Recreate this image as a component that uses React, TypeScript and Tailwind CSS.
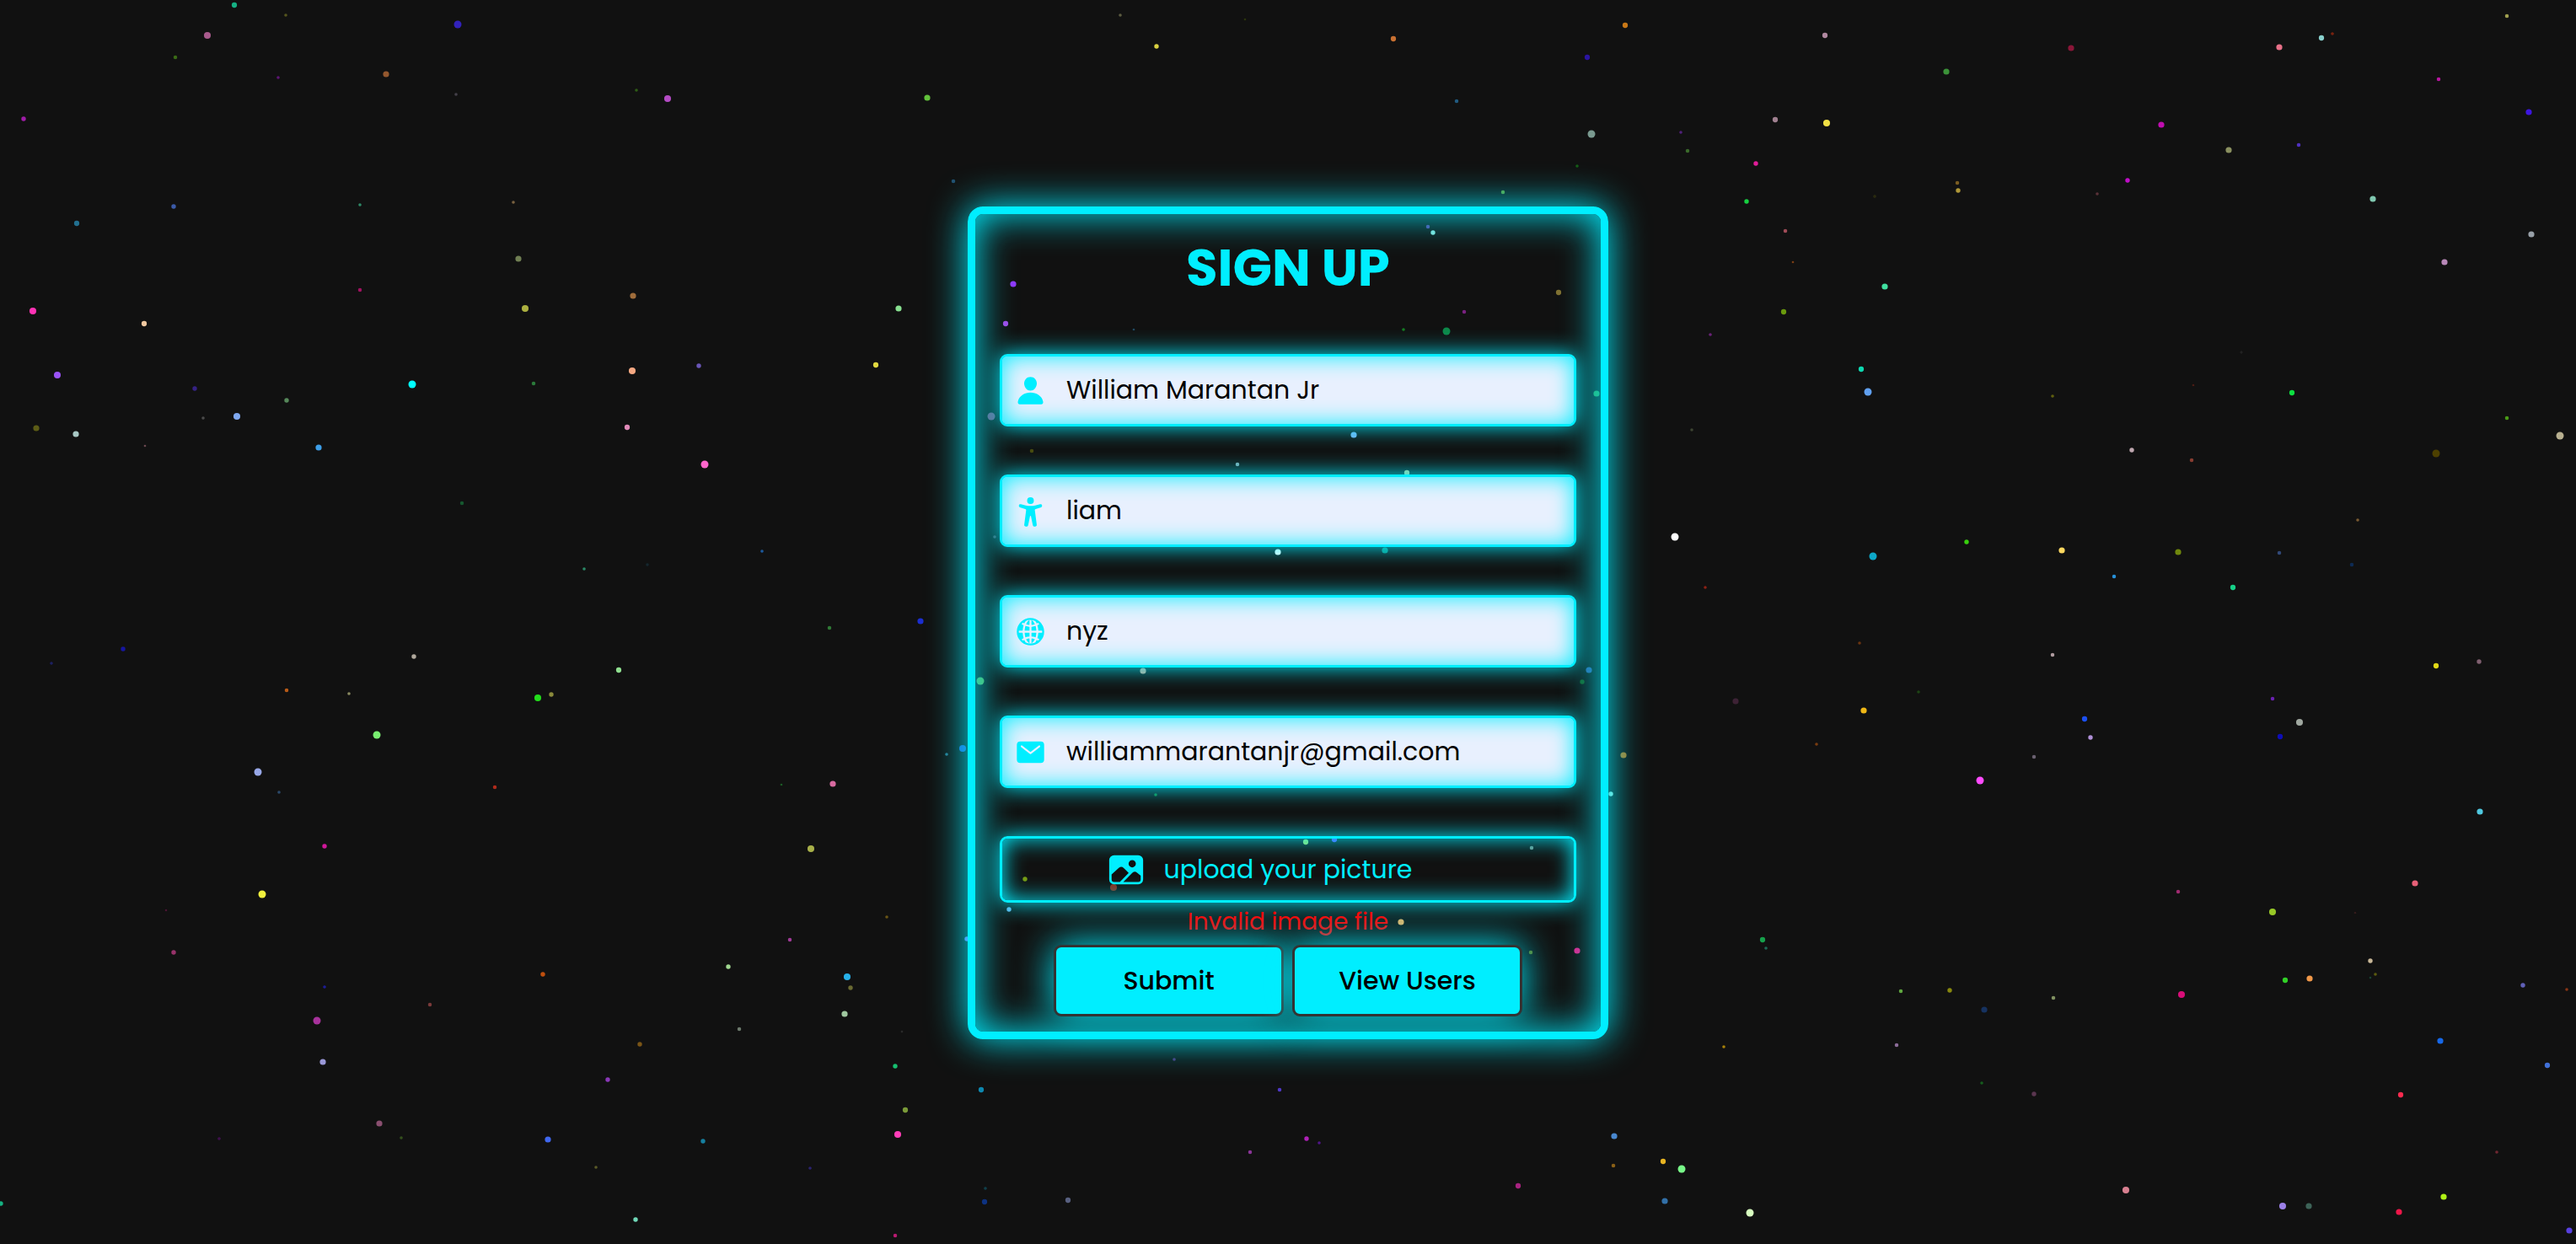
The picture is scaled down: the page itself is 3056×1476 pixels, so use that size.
import React from "react";
import { IoGlobe, IoImage, IoMail, IoPerson } from "react-icons/io5";

type Star = [x: number, y: number, r: number, color: string];

const stars: Star[] = [
  [278, 6, 3.5, "#12b083"], [339, 18, 2, "#55551a"], [543, 29, 5, "#3322bb"], [246, 42, 4.5, "#a85a8c"],
  [208, 68, 2.5, "#3a6a15"], [330, 92, 2, "#5c1673"], [458, 88, 4, "#94592f"], [541, 112, 2, "#44404a"],
  [755, 107, 2, "#2f5c15"], [792, 117, 4.5, "#b44cc4"], [1100, 116, 4, "#62c23a"], [28, 141, 3, "#a01ca8"],
  [206, 245, 3, "#3a5aa8"], [427, 243, 2, "#2d8a68"], [609, 240, 2, "#7a6240"], [91, 265, 3.5, "#226f90"],
  [615, 307, 4, "#6f7f52"], [623, 366, 4.5, "#acb03f"], [427, 344, 2.5, "#a01260"], [751, 351, 4, "#a06d3a"],
  [39, 369, 4.5, "#ff33b5"], [171, 384, 3.5, "#f0c8a0"], [1066, 366, 4, "#88e090"], [68, 445, 4.5, "#9a52f5"],
  [231, 461, 3, "#352285"], [340, 475, 3, "#56885a"], [489, 456, 5, "#00ffff"], [633, 455, 2.5, "#2c7a3a"],
  [750, 440, 4.5, "#f5a882"], [829, 434, 3, "#6a56b8"], [1039, 433, 3.5, "#e0d840"], [281, 494, 4.5, "#7fa8f0"],
  [241, 496, 2, "#4c4c4c"], [43, 508, 4, "#5c5c14"], [90, 515, 4, "#a8c8c4"], [172, 529, 1.5, "#6a4a50"],
  [378, 531, 4, "#3c9ee8"], [744, 507, 3.5, "#e08ab8"], [836, 551, 5, "#ff66cc"], [548, 597, 2.5, "#14582e"],
  [904, 654, 2, "#1f5a9e"], [693, 675, 2, "#2a8a68"], [768, 670, 2, "#14282e"], [1092, 737, 4, "#1a2fd0"],
  [146, 770, 3, "#1414a0"], [61, 787, 2, "#1a2060"], [491, 779, 3, "#b0a89c"], [984, 745, 2.5, "#2f7a36"],
  [734, 795, 3.5, "#90e090"], [340, 819, 2.5, "#b85a18"], [414, 823, 2, "#8a8a60"], [638, 828, 4.5, "#22dd1a"],
  [654, 824, 3, "#8a8a3a"], [447, 872, 5, "#78ee70"], [306, 916, 5, "#98a8e8"], [331, 940, 2, "#2c4a6c"],
  [587, 934, 2.5, "#b02a1c"], [927, 931, 1.5, "#1f5a26"], [988, 930, 4, "#d86aa0"], [1123, 895, 2, "#2a7890"],
  [385, 1004, 3, "#d0189a"], [962, 1007, 4.5, "#a8b04a"], [311, 1061, 5, "#f0f03c"], [197, 1080, 1.5, "#4a1830"],
  [1052, 1088, 2, "#6a5514"], [206, 1130, 3, "#98326a"], [937, 1115, 2.5, "#a03a98"], [864, 1147, 3, "#a0d890"],
  [644, 1156, 3, "#c05010"], [1005, 1159, 4.5, "#28b0e8"], [1009, 1172, 3, "#6a6a30"], [385, 1171, 2, "#1a1a98"],
  [1002, 1203, 4, "#a0c8a0"], [510, 1192, 2.5, "#7a3a3a"], [376, 1211, 5, "#a8329c"], [877, 1221, 2.5, "#6c7a6c"],
  [1070, 1224, 1.5, "#2c2c2c"], [759, 1239, 3, "#7a5418"], [1062, 1265, 3, "#18c070"], [383, 1260, 4, "#9a98d8"],
  [721, 1281, 3, "#8a38b8"], [1074, 1317, 3.5, "#7a9a38"], [1065, 1346, 4.5, "#ff3cb8"], [450, 1333, 4, "#8a5070"],
  [476, 1350, 2, "#34501c"], [260, 1351, 2, "#401050"], [650, 1352, 4, "#4068f0"], [834, 1354, 3, "#1880a0"],
  [707, 1385, 2, "#5a5a28"], [961, 1386, 2, "#2a2470"], [1, 1428, 3, "#12b080"], [754, 1447, 3, "#70d8b8"],
  [1062, 1466, 2.5, "#b81a70"],
  [1928, 30, 3.5, "#c87818"], [2165, 42, 3.5, "#b088a0"], [2457, 57, 4, "#8a1838"], [2704, 56, 4, "#e87088"],
  [2754, 45, 3.5, "#88d0cc"], [2767, 40, 2, "#7a2410"], [2974, 19, 2.5, "#a0a050"], [2309, 85, 4, "#3a9238"],
  [2893, 94, 2.5, "#b818a0"], [2106, 142, 3.5, "#a08090"], [2167, 146, 4.5, "#f0e044"], [1994, 157, 2, "#50207a"],
  [2002, 179, 2.5, "#3a6a2c"], [2083, 194, 3, "#e01a98"], [2564, 148, 4, "#c010b0"], [3000, 133, 4, "#3c14e0"],
  [2727, 172, 2.5, "#5030c0"], [2644, 178, 4, "#8a9060"], [2322, 217, 2.5, "#7a5c20"], [2323, 226, 3, "#b09838"],
  [2524, 214, 3, "#c010c8"], [2488, 230, 2, "#5a3038"], [2224, 233, 2, "#2c2c10"], [2072, 239, 3, "#18d040"],
  [2815, 236, 4, "#80c8b0"], [2118, 274, 2.5, "#a04c58"], [2127, 311, 1.5, "#7a3c14"], [3003, 278, 4, "#98a0a8"],
  [2900, 311, 4, "#b888b8"], [2236, 340, 4, "#40e0a0"], [2116, 370, 3.5, "#6a9a10"], [2029, 397, 2, "#6a2478"],
  [2208, 438, 3.5, "#10d8b0"], [2216, 465, 5, "#60a0f0"], [2659, 418, 2, "#222222"], [2602, 457, 1.5, "#4a1c18"],
  [2719, 466, 3.5, "#10e040"], [2435, 470, 2, "#60600f"], [2974, 496, 2.5, "#4a9a18"], [3037, 517, 5, "#b8b090"],
  [2007, 510, 2, "#3e4430"], [2529, 534, 3, "#c0a8b0"], [2890, 538, 5, "#4e4000"], [2600, 546, 2.5, "#883c30"],
  [1987, 637, 5, "#ffffff"], [2797, 617, 2, "#7a5a30"], [2333, 643, 3, "#38d010"], [2222, 660, 5, "#10a8c8"],
  [2446, 653, 4, "#ffd860"], [2584, 655, 4, "#70880c"], [2704, 656, 2.5, "#304878"], [2790, 670, 2.5, "#102a54"],
  [2508, 684, 2.5, "#2890d8"], [2649, 697, 3.5, "#18d088"], [2023, 697, 2, "#8a2018"],
  [2206, 763, 2, "#6a3410"], [2435, 777, 2.5, "#b09ca0"], [2890, 790, 3.5, "#e0d818"], [2941, 785, 3, "#806070"],
  [2276, 821, 2, "#1e4418"], [2059, 832, 4, "#3c2434"], [2211, 843, 4, "#f0b818"], [2696, 829, 2.5, "#6a20b0"],
  [2473, 853, 3.5, "#1c50f0"], [2728, 857, 4.5, "#a0a8a0"], [2480, 875, 3, "#b090d8"], [2705, 874, 3.5, "#0c0cb8"],
  [2155, 883, 2, "#7a3c10"], [2413, 898, 2.5, "#6a6070"], [2349, 926, 5, "#ff4cff"], [1926, 896, 4, "#b07820"],
  [2942, 963, 4, "#50c8e0"], [2865, 1048, 4, "#e86078"], [2584, 1058, 2.5, "#a02c70"], [2696, 1082, 4.5, "#98c828"],
  [2794, 1083, 1.5, "#301c1c"], [2091, 1115, 3.5, "#18a04c"], [2095, 1125, 2, "#1a6a58"], [2812, 1140, 3, "#c8b898"],
  [2818, 1156, 2, "#5a5a10"], [2812, 1160, 1.5, "#1a4030"], [2711, 1163, 3.5, "#30d028"], [2740, 1161, 4, "#f09848"],
  [2993, 1169, 3, "#6060b8"], [3045, 1174, 2, "#883418"], [2255, 1176, 2.5, "#60a840"], [2313, 1175, 3, "#888810"],
  [2436, 1184, 2.5, "#809060"], [2588, 1180, 4.5, "#d80c78"], [2354, 1198, 4, "#163060"], [2895, 1235, 4, "#1868e8"],
  [2045, 1242, 2, "#a88008"], [2250, 1240, 2.5, "#8c6c98"], [3022, 1264, 3.5, "#4070d8"], [2351, 1285, 2, "#145c1c"],
  [2413, 1298, 3, "#5a3450"], [2848, 1299, 3.5, "#ff2c50"], [2962, 1367, 2, "#702830"], [1973, 1378, 3.5, "#e8b420"],
  [1995, 1387, 5, "#78f888"], [2522, 1412, 4.5, "#d88090"], [2899, 1420, 4, "#b0f018"], [1975, 1425, 4, "#3070a8"],
  [2076, 1439, 5, "#d8ffc0"], [2708, 1431, 4.5, "#9c80e8"], [2739, 1431, 4, "#3c6458"], [2846, 1438, 4, "#f01848"],
  [3048, 1460, 4, "#5840e0"],
  [1329, 18, 2, "#5c5c40"], [1477, 23, 1.5, "#2c3410"], [1372, 55, 3, "#d8d040"], [1653, 46, 3.5, "#c87030"],
  [1883, 68, 3.5, "#2c12a0"], [1728, 120, 2.5, "#205a80"], [1888, 159, 5, "#7a9a90"], [1871, 197, 2, "#145c14"],
  [1783, 228, 2.5, "#5c9a38"], [1131, 215, 2.5, "#205070"], [1393, 1257, 2, "#50307a"], [1164, 1293, 3.5, "#0c88b0"],
  [1518, 1293, 2.5, "#5038c8"], [1550, 1351, 3, "#b020b8"], [1565, 1356, 2, "#50148a"], [1483, 1367, 2.5, "#8a3498"],
  [1915, 1348, 4, "#4888d0"], [1914, 1383, 2.5, "#8a6018"], [1801, 1407, 3.5, "#a82480"], [1169, 1410, 2, "#10404c"],
  [1168, 1426, 3.5, "#103080"], [1267, 1424, 3.5, "#586080"],
  [1694, 269, 2.5, "#5840a0"], [1700, 276, 3, "#88e0d8"], [1202, 337, 4, "#9038ff"], [1193, 384, 3.5, "#a048e8"],
  [1849, 347, 3.5, "#807030"], [1737, 370, 2.5, "#7a2080"], [1345, 391, 1.5, "#204860"], [1665, 391, 2, "#147a24"],
  [1716, 393, 5, "#0c8848"], [1176, 494, 5, "#804878"], [1894, 467, 4, "#30a050"], [1606, 516, 4, "#78b0f0"],
  [1224, 535, 2.5, "#4a4a10"], [1468, 551, 2.5, "#80a8b0"], [1669, 561, 3.5, "#c0c890"], [1516, 655, 4, "#ffffff"],
  [1643, 653, 4, "#109080"], [1356, 796, 4, "#d0a088"], [1163, 808, 5, "#60b050"], [1885, 795, 4, "#3058a0"],
  [1877, 809, 3, "#185c20"], [1142, 888, 4.5, "#2058d0"], [1911, 942, 3, "#a0e0d0"], [1371, 943, 2, "#148038"],
  [1180, 637, 2, "#504858"], [1549, 999, 3.5, "#a0e060"], [1583, 996, 3.5, "#6040ff"], [1817, 1006, 2.5, "#709088"],
  [1216, 1043, 3, "#7a9a10"], [1321, 1053, 4.5, "#8a2c14"], [1197, 1079, 3, "#68b0e8"], [1662, 1094, 4, "#f0b060"],
  [1816, 1130, 2.5, "#607a20"], [1871, 1128, 4, "#e0208c"], [1147, 1114, 3, "#8070f8"],
];

function StarField() {
  return (
    <svg
      aria-hidden="true"
      className="absolute inset-0 h-full w-full"
      viewBox="0 0 3056 1476"
      preserveAspectRatio="xMidYMid slice"
    >
      <defs>
        <filter id="star-glow" x="0" y="0" width="100%" height="100%">
          <feGaussianBlur stdDeviation="0.6" />
        </filter>
      </defs>
      <g filter="url(#star-glow)">
        {stars.map(([x, y, r, color]) => (
          <circle key={`${x}-${y}`} cx={x} cy={y} r={r * 0.9} fill={color} />
        ))}
      </g>
    </svg>
  );
}

interface IconProps {
  className?: string;
}

function BodyIcon({ className }: IconProps) {
  return (
    <svg viewBox="0 0 40 40" fill="currentColor" aria-hidden="true" className={className}>
      <circle cx="20" cy="6.4" r="4.3" />
      <path d="M5.2 12.4C5.5 11.2 6.5 10.7 7.7 11.1C12 12.5 16 13.3 20 13.3S28 12.5 32.3 11.1C33.5 10.7 34.5 11.2 34.8 12.4C35.1 13.6 34.6 14.6 33.5 15L26.7 17.2C25.9 17.5 25.5 18 25.6 18.9L28 37.4C28.2 38.7 27.5 39.5 26.3 39.6H25C23.9 39.6 23.3 39 23 38L20.6 26.6C20.4 25.8 19.6 25.8 19.4 26.6L17 38C16.7 39 16.1 39.6 15 39.6H13.7C12.5 39.5 11.8 38.7 12 37.4L14.4 18.9C14.5 18 14.1 17.5 13.3 17.2L6.5 15C5.4 14.6 4.9 13.6 5.2 12.4Z" />
    </svg>
  );
}

interface FieldProps {
  id: string;
  label: string;
  icon: React.ComponentType<IconProps>;
  type?: string;
  value: string;
}

function Field({ id, label, icon: Icon, type = "text", value }: FieldProps) {
  return (
    <div className="relative flex h-[86px] items-center rounded-[9px] border-3 border-[#00eeff] bg-[#e8f0fe] pr-4 pl-[15px] shadow-[0_0_27px_#00eeff,inset_0_0_27px_#00eeff]">
      <label htmlFor={id} className="mr-6 shrink-0 text-[#00eeff]">
        <Icon className="size-[37px]" />
      </label>
      <input
        id={id}
        type={type}
        aria-label={label}
        defaultValue={value}
        className="h-full w-full min-w-0 bg-transparent text-3xl text-black outline-none"
      />
    </div>
  );
}

const buttonClass =
  "h-[85px] w-[273px] rounded-[9px] border-3 border-[#333333] bg-[#00eeff] text-3xl font-medium text-black shadow-[0_0_45px_#00eeff]";

export default function App() {
  return (
    <main className="relative flex min-h-screen items-center justify-center overflow-hidden bg-[#111111] pt-[2px] font-[Poppins,Inter,sans-serif]">
      <StarField />
      <form
        className="relative w-full max-w-[760px] rounded-[18px] border-9 border-[#00eeff] px-[29px] pt-8 pb-[18px] shadow-[0_0_45px_#00eeff,inset_0_0_45px_#00eeff]"
        onSubmit={(e: React.FormEvent) => e.preventDefault()}
      >
        <h1 className="mb-[70px] text-center text-[61px] leading-[64px] font-bold text-[#00eeff]">SIGN UP</h1>

        <div className="flex flex-col gap-[57px]">
          <Field id="name" label="Name" icon={IoPerson} value="William Marantan Jr" />
          <Field id="nickname" label="Nickname" icon={BodyIcon} value="liam" />
          <Field id="country" label="Country" icon={IoGlobe} value="nyz" />
          <Field id="email" label="Email" icon={IoMail} type="email" value="williammarantanjr@gmail.com" />

          <label
            htmlFor="picture"
            className="grid h-[79px] cursor-pointer grid-cols-[1fr_auto_1fr] items-center rounded-[9px] border-3 border-[#00eeff] text-3xl text-[#00eeff] shadow-[0_0_27px_#00eeff,inset_0_0_27px_#00eeff]"
          >
            <IoImage className="mr-[22px] size-[46px] justify-self-end" aria-hidden="true" />
            <span>upload your picture</span>
            <input id="picture" type="file" accept="image/*" className="sr-only" />
          </label>
        </div>

        <p role="alert" className="mb-1 text-center text-[28px] leading-[46px] text-[#ff0000]">
          Invalid image file
        </p>

        <div className="flex justify-center gap-[10px]">
          <button type="submit" className={buttonClass}>
            Submit
          </button>
          <button type="button" className={buttonClass}>
            View Users
          </button>
        </div>
      </form>
    </main>
  );
}
